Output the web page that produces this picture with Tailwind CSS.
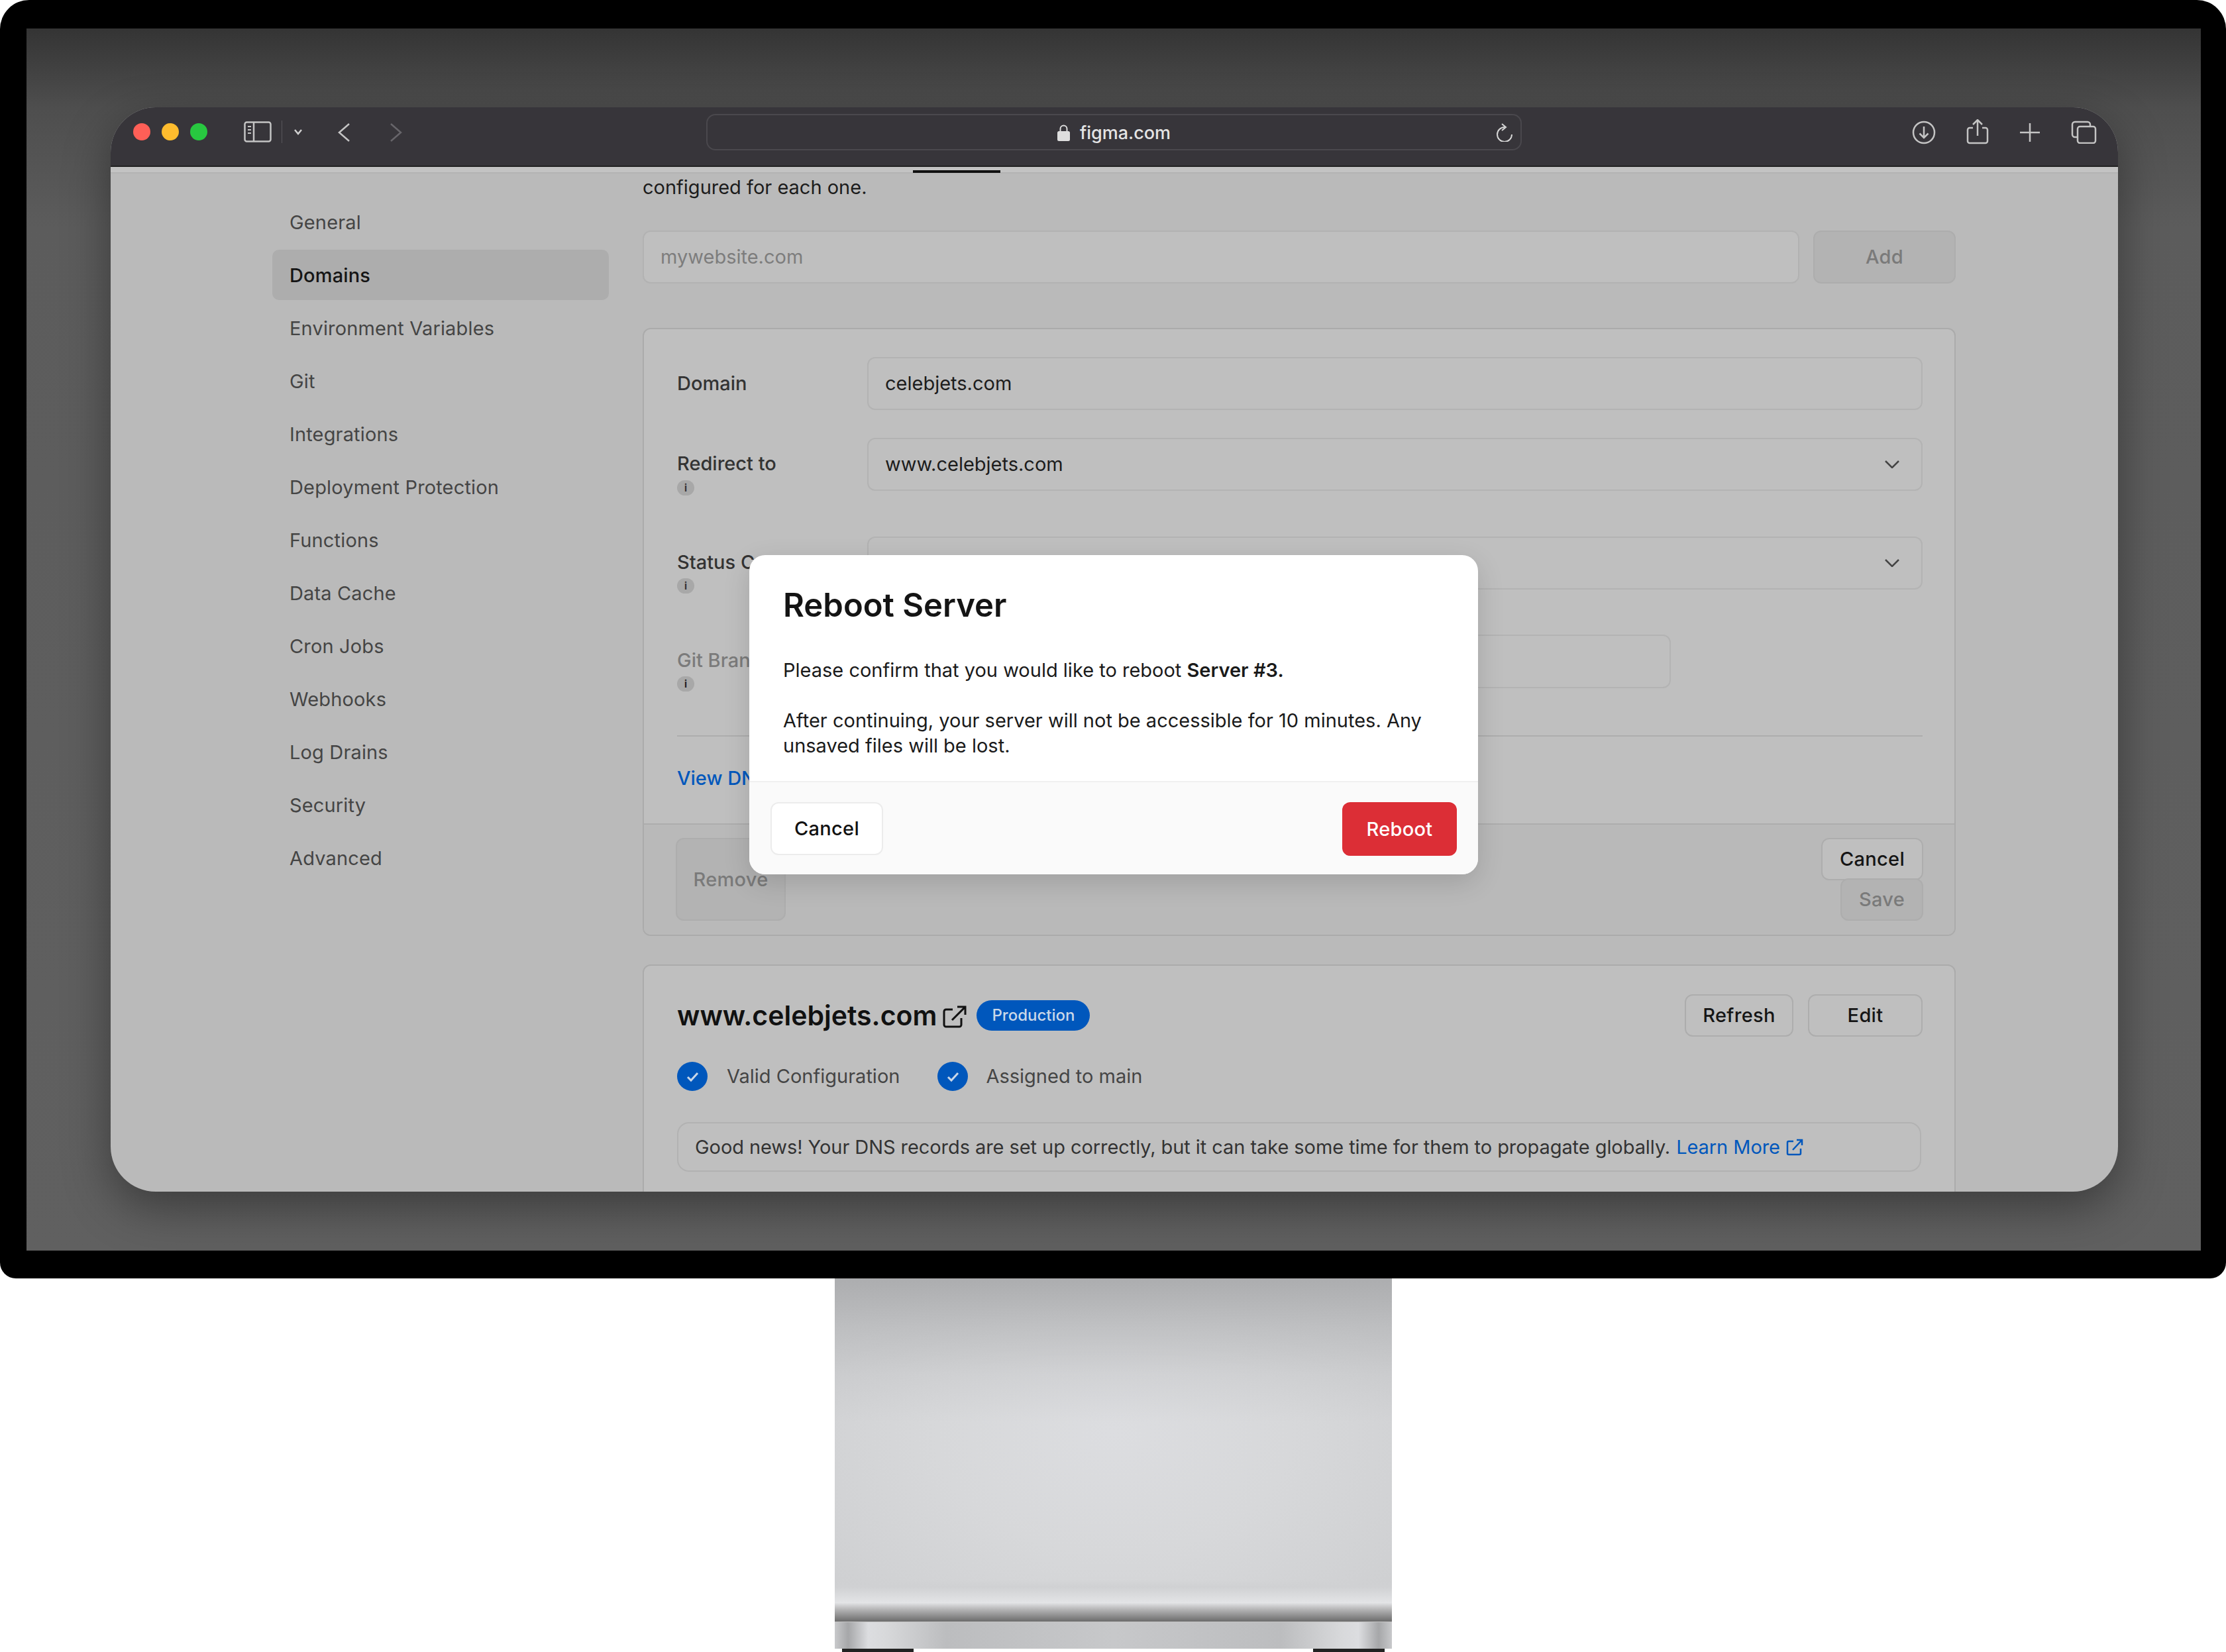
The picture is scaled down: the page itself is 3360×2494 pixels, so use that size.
<!DOCTYPE html>
<html lang="en">
<head>
    <meta charset="UTF-8">
    <title>Reboot Server</title>
    <script src="https://cdn.jsdelivr.net/npm/@tailwindcss/browser@4"></script>
</head>
<body class="bg-white font-['Inter',sans-serif]">
<div class="w-[3360px] h-[2494px] overflow-hidden flex flex-col items-center">

    <!-- monitor -->
    <div class="w-[3360px] h-[1930px] shrink-0 bg-black rounded-t-[44px] rounded-b-[24px] pt-[43px] pl-[40px] pr-[38px]">
        <div class="relative h-[1845px] pt-[119px] pl-[127px] bg-[linear-gradient(180deg,#343434_0,#4e4e4e_120px,#5c5c5c_300px,#606060_100%)]">

            <!-- browser window -->
            <div class="w-[3030px] h-[1637px] rounded-[68px] overflow-hidden bg-[#bababa] flex flex-col shadow-[0_24px_70px_rgba(0,0,0,0.38)]">

                <!-- toolbar -->
                <div class="relative h-[90px] shrink-0 bg-[#37353a] border-b-2 border-[#222] flex items-center">
                    <div class="flex gap-[17px] ml-[34px] mt-[-14px]">
                        <div class="w-[26px] h-[26px] rounded-full bg-[#ff5f57]"></div>
                        <div class="w-[26px] h-[26px] rounded-full bg-[#febc2e]"></div>
                        <div class="w-[26px] h-[26px] rounded-full bg-[#28c840]"></div>
                    </div>
                    <svg class="ml-[55px] mt-[-14px]" width="42" height="32" viewBox="0 0 42 32" fill="none" stroke="#c4c4c4" stroke-width="2.5"><rect x="1.5" y="1.5" width="39" height="29" rx="3"/><path d="M15 2v28"/><path d="M6 8h5M6 13h5M6 18h5" stroke-width="2"/></svg>
                    <div class="w-[1px] h-[34px] bg-[#57555a] ml-[15px] mt-[-14px]"></div>
                    <svg class="ml-[17px] mt-[-14px]" width="14" height="10" viewBox="0 0 14 10" fill="none" stroke="#d0d0d0" stroke-width="2.5"><path d="M2 2l5 6 5-6"/></svg>
                    <svg class="ml-[52px] mt-[-13px]" width="20" height="28" viewBox="0 0 20 28" fill="none" stroke="#c4c4c4" stroke-width="2.5"><path d="M18 1L3 14l15 13"/></svg>
                    <svg class="ml-[59px] mt-[-13px]" width="20" height="28" viewBox="0 0 20 28" fill="none" stroke="#67656a" stroke-width="2.5"><path d="M2 1l15 13L2 27"/></svg>

                    <!-- address bar -->
                    <div class="relative ml-[458px] mt-[-13px] w-[1231px] h-[55px] rounded-[14px] border-2 border-[#4a484d] flex items-center justify-center">
                        <svg class="mr-[15px] mt-[2px]" width="19" height="25" viewBox="0 0 19 25"><path d="M4.5 11V6.5a5 5 0 0 1 10 0V11" fill="none" stroke="#dedede" stroke-width="2"/><rect x="0" y="10" width="19" height="15" rx="2.5" fill="#dedede"/></svg>
                        <span class="text-[27px] leading-[34px] mt-[2px] font-medium text-[#e4e4e4]">figma.com</span>
                        <svg class="absolute right-[11px] top-[12px]" width="26" height="28" viewBox="0 0 26 28" fill="none" stroke="#d6d6d6" stroke-width="2"><path d="M24 17A11 11 0 1 1 13 6"/><path d="M9 1l6 5-6 5"/></svg>
                    </div>

                    <svg class="ml-[589px] mt-[-13px]" width="36" height="36" viewBox="0 0 36 36" fill="none" stroke="#c4c4c4" stroke-width="2.5"><circle cx="18" cy="18" r="16"/><path d="M18 9v17M11.5 19.5L18 26l6.5-6.5"/></svg>
                    <svg class="ml-[46px] mt-[-15px]" width="34" height="38" viewBox="0 0 34 38" fill="none" stroke="#c4c4c4" stroke-width="2.5"><path d="M10 13H5a3 3 0 0 0-3 3v17a3 3 0 0 0 3 3h24a3 3 0 0 0 3-3V16a3 3 0 0 0-3-3h-5"/><path d="M17 25V2M10 8l7-7 7 7"/></svg>
                    <svg class="ml-[47px] mt-[-13px]" width="30" height="28" viewBox="0 0 30 28" fill="none" stroke="#c4c4c4" stroke-width="2.5"><path d="M15 0v28M0 14h30"/></svg>
                    <svg class="ml-[47px] mt-[-13px]" width="39" height="35" viewBox="0 0 39 35" fill="none" stroke="#c4c4c4" stroke-width="2.5"><path d="M9 25H6a4 4 0 0 1-4-4V6a4 4 0 0 1 4-4h19a4 4 0 0 1 4 4v3"/><rect x="10" y="9" width="27" height="25" rx="3.5"/></svg>
                </div>

                <!-- tab strip under the toolbar -->
                <div class="relative h-[10px] shrink-0 bg-[#c3c3c3] border-b-2 border-[#b3b3b3]">
                    <div class="absolute left-[1211px] top-[5px] w-[132px] h-[4px] bg-[#111]"></div>
                </div>

                <!-- page -->
                <div class="flex flex-1 min-h-0 text-[29px] leading-[38px]">

                    <!-- settings nav -->
                    <nav class="w-[508px] ml-[244px] pt-[35px] shrink-0 flex flex-col gap-[4px] text-[#454545] tracking-[0.15px]">
                        <div class="h-[76px] px-[26px] pt-[1px] flex items-center">General</div>
                        <div class="h-[76px] px-[26px] pt-[1px] flex items-center rounded-[10px] bg-[#adadad] text-[#151515] font-medium">Domains</div>
                        <div class="h-[76px] px-[26px] pt-[1px] flex items-center">Environment Variables</div>
                        <div class="h-[76px] px-[26px] pt-[1px] flex items-center">Git</div>
                        <div class="h-[76px] px-[26px] pt-[1px] flex items-center">Integrations</div>
                        <div class="h-[76px] px-[26px] pt-[1px] flex items-center">Deployment Protection</div>
                        <div class="h-[76px] px-[26px] pt-[1px] flex items-center">Functions</div>
                        <div class="h-[76px] px-[26px] pt-[1px] flex items-center">Data Cache</div>
                        <div class="h-[76px] px-[26px] pt-[1px] flex items-center">Cron Jobs</div>
                        <div class="h-[76px] px-[26px] pt-[1px] flex items-center">Webhooks</div>
                        <div class="h-[76px] px-[26px] pt-[1px] flex items-center">Log Drains</div>
                        <div class="h-[76px] px-[26px] pt-[1px] flex items-center">Security</div>
                        <div class="h-[76px] px-[26px] pt-[1px] flex items-center">Advanced</div>
                    </nav>

                    <!-- main column -->
                    <main class="w-[1982px] ml-[51px] shrink-0 pt-[2px] text-[#1c1c1c]">
                        <p>configured for each one.</p>

                        <div class="flex gap-[21px] mt-[46px]">
                            <div class="w-[1746px] h-[80px] rounded-[12px] border-2 border-[#b2b2b2] bg-[#bfbfbf] px-[25px] flex items-center text-[#7d7d7d]">mywebsite.com</div>
                            <div class="w-[215px] h-[80px] rounded-[12px] border-2 border-[#adadad] bg-[#b3b3b3] flex items-center justify-center font-medium text-[#7a7a7a] tracking-[0.3px]">Add</div>
                        </div>

                        <!-- apex domain card -->
                        <section class="mt-[67px] h-[918px] rounded-[12px] border-2 border-[#ababab] bg-[#bfbfbf] overflow-hidden">
                            <div class="h-[746px] pl-[50px] pr-[48px] pt-[42px]">
                                <div class="flex h-[80px]">
                                    <div class="w-[287px] pt-[21px] font-medium text-[#333]">Domain</div>
                                    <div class="flex-1 h-[80px] rounded-[12px] border-2 border-[#b3b3b3] px-[25px] flex items-center">celebjets.com</div>
                                </div>
                                <div class="flex h-[80px] mt-[42px]">
                                    <div class="w-[287px] pt-[20px] font-medium text-[#333]">
                                        Redirect to
                                        <div class="w-[26px] h-[23px] mt-[6px] rounded-full bg-[#a8a8a8] flex items-center justify-center text-[15px] leading-[15px] font-bold">i</div>
                                    </div>
                                    <div class="flex-1 h-[80px] rounded-[12px] border-2 border-[#b3b3b3] px-[25px] flex items-center justify-between">
                                        www.celebjets.com
                                        <svg class="mr-[8px]" width="22" height="12" viewBox="0 0 22 12" fill="none" stroke="#444" stroke-width="2.5"><path d="M1 1l10 10L21 1"/></svg>
                                    </div>
                                </div>
                                <div class="flex h-[80px] mt-[69px]">
                                    <div class="w-[287px] pt-[20px] font-medium text-[#333]">
                                        Status Code
                                        <div class="w-[26px] h-[23px] mt-[5px] rounded-full bg-[#a8a8a8] flex items-center justify-center text-[15px] leading-[15px] font-bold">i</div>
                                    </div>
                                    <div class="flex-1 h-[80px] rounded-[12px] border-2 border-[#b3b3b3] px-[25px] flex items-center justify-end">
                                        <svg class="mr-[8px]" width="22" height="12" viewBox="0 0 22 12" fill="none" stroke="#444" stroke-width="2.5"><path d="M1 1l10 10L21 1"/></svg>
                                    </div>
                                </div>
                                <div class="flex h-[81px] mt-[68px]">
                                    <div class="w-[287px] pt-[20px] font-medium text-[#7b7b7b]">
                                        Git Branch
                                        <div class="w-[26px] h-[23px] mt-[5px] rounded-full bg-[#a8a8a8] flex items-center justify-center text-[15px] leading-[15px] font-bold text-[#222]">i</div>
                                    </div>
                                    <div class="w-[1213px] h-[81px] rounded-[12px] border-2 border-[#b3b3b3]"></div>
                                </div>
                                <div class="h-[2px] bg-[#adadad] mt-[71px]"></div>
                                <div class="mt-[44px] text-[#0057bc] font-medium">View DNS Records</div>
                            </div>
                            <div class="h-[168px] pl-[48px] pr-[47px] pt-[20px] bg-[#b9b9b9] border-t-2 border-[#adadad] flex justify-between">
                                <div class="w-[166px] h-[125px] rounded-[12px] border-2 border-[#adadad] bg-[#b3b3b3] flex items-center justify-center font-medium text-[#7a7a7a] tracking-[0.3px]">Remove</div>
                                <div class="flex flex-col items-end">
                                    <div class="w-[154px] h-[64px] rounded-[12px] border-2 border-[#adadad] bg-[#bfbfbf] flex items-center justify-center font-medium text-[#151515] tracking-[0.3px]">Cancel</div>
                                    <div class="w-[125px] h-[64px] mt-[-3px] rounded-[12px] border-2 border-[#adadad] bg-[#b3b3b3] flex items-center justify-center font-medium text-[#7a7a7a] tracking-[0.3px]">Save</div>
                                </div>
                            </div>
                        </section>

                        <!-- www domain card -->
                        <section class="mt-[43px] h-[420px] rounded-t-[12px] border-2 border-[#ababab] bg-[#bfbfbf] pl-[50px] pr-[48px] pt-[43px]">
                            <div class="flex items-center h-[64px]">
                                <h2 class="text-[41px] leading-[48px] font-semibold text-[#111]">www.celebjets.com</h2>
                                <svg class="ml-[9px] mt-[4px]" width="36" height="34" viewBox="0 0 36 34" fill="none" stroke="#111" stroke-width="3"><path d="M15 6H5a3 3 0 0 0-3 3v20a3 3 0 0 0 3 3h20a3 3 0 0 0 3-3V19"/><path d="M14 22L34 2M22 2h12v12"/></svg>
                                <span class="ml-[15px] h-[46px] px-[23px] rounded-full bg-[#0057bc] text-[#c9d7e8] text-[24px] leading-[46px] font-medium">Production</span>
                                <div class="w-[164px] h-[64px] ml-auto rounded-[12px] border-2 border-[#adadad] flex items-center justify-center font-medium text-[#151515] tracking-[0.3px]">Refresh</div>
                                <div class="w-[173px] h-[64px] ml-[22px] rounded-[12px] border-2 border-[#adadad] flex items-center justify-center font-medium text-[#151515] tracking-[0.3px]">Edit</div>
                            </div>
                            <div class="flex items-center h-[44px] mt-[38px] text-[#454545]">
                                <svg width="46" height="44" viewBox="0 0 46 44"><ellipse cx="23" cy="22" rx="23" ry="22" fill="#0057bc"/><path d="M16 23l5 5 10-11" fill="none" stroke="#c9d7e8" stroke-width="3"/></svg>
                                <span class="ml-[29px]">Valid Configuration</span>
                                <svg class="ml-[57px]" width="46" height="44" viewBox="0 0 46 44"><ellipse cx="23" cy="22" rx="23" ry="22" fill="#0057bc"/><path d="M16 23l5 5 10-11" fill="none" stroke="#c9d7e8" stroke-width="3"/></svg>
                                <span class="ml-[27px]">Assigned to main</span>
                            </div>
                            <div class="w-[1878px] h-[75px] mt-[47px] rounded-[18px] border-2 border-[#b2b2b2] px-[25px] flex items-center text-[#333] whitespace-nowrap tracking-[-0.07px]">
                                Good news! Your DNS records are set up correctly, but it can take some time for them to propagate globally.
                                <span class="ml-[9px] text-[#0057bc]">Learn More</span>
                                <svg class="ml-[9px]" width="26" height="26" viewBox="0 0 26 26" fill="none" stroke="#0057bc" stroke-width="2.5"><path d="M11 4H4a2 2 0 0 0-2 2v16a2 2 0 0 0 2 2h16a2 2 0 0 0 2-2v-7"/><path d="M10 17L24 2M16 2h8v8"/></svg>
                            </div>
                        </section>
                    </main>
                </div>
            </div>

            <!-- confirm modal -->
            <div class="absolute left-[1091px] top-[795px] w-[1100px] h-[482px] rounded-[24px] bg-white overflow-hidden flex flex-col shadow-[0_12px_40px_rgba(0,0,0,0.14)] text-[29px] leading-[38px] text-[#1a1a1a]">
                <div class="h-[343px] px-[51px] pt-[43px] border-b-2 border-[#f0f0f0]">
                    <h1 class="text-[49px] leading-[66px] font-semibold text-[#141414]">Reboot Server</h1>
                    <p class="mt-[46px]">Please confirm that you would like to reboot <b class="font-semibold">Server #3.</b></p>
                    <p class="mt-[38px]">After continuing, your server will not be accessible for 10 minutes. Any unsaved files will be lost.</p>
                </div>
                <div class="flex-1 bg-[#fafafa] px-[32px] pt-[30px] flex justify-between tracking-[0.3px]">
                    <div class="w-[170px] h-[80px] rounded-[12px] border-2 border-[#ececec] bg-white flex items-center justify-center font-medium text-[#111]">Cancel</div>
                    <div class="w-[173px] h-[81px] rounded-[12px] bg-[#dc2e36] flex items-center justify-center font-medium text-white">Reboot</div>
                </div>
            </div>
        </div>
    </div>

    <!-- stand -->
    <div class="w-[841px] h-[518px] shrink-0 bg-[linear-gradient(180deg,rgba(172,173,175,1)_0,rgba(176,177,179,0.6)_14%,rgba(176,177,179,0.2)_28%,rgba(176,177,179,0)_42%,rgba(208,209,211,0)_88%,#d0d1d3_90%,#e3e4e6_94.5%,#b4b4b5_96.5%,#6c6c6c_100%),radial-gradient(ellipse_at_50%_45%,#dcdde0_0,#d7d8da_45%,#cdced0_100%)]"></div>
    <div class="w-[841px] h-[41px] shrink-0 border-t border-[#c4c4c4] bg-[linear-gradient(90deg,#c8c9cb_0,#a6a7a9_2.4%,#dcdde0_6%,#d8d9db_9%,#bcbdbf_20%,#c7c8ca_50%,#bcbdbf_80%,#d8d9db_91%,#dcdde0_94%,#a6a7a9_97.6%,#c8c9cb_100%)]"></div>
    <div class="w-[841px] h-[5px] shrink-0 px-[11px] flex justify-between">
        <div class="w-[108px] bg-[#222]"></div>
        <div class="w-[108px] bg-[#222]"></div>
    </div>
</div>
</body>
</html>
